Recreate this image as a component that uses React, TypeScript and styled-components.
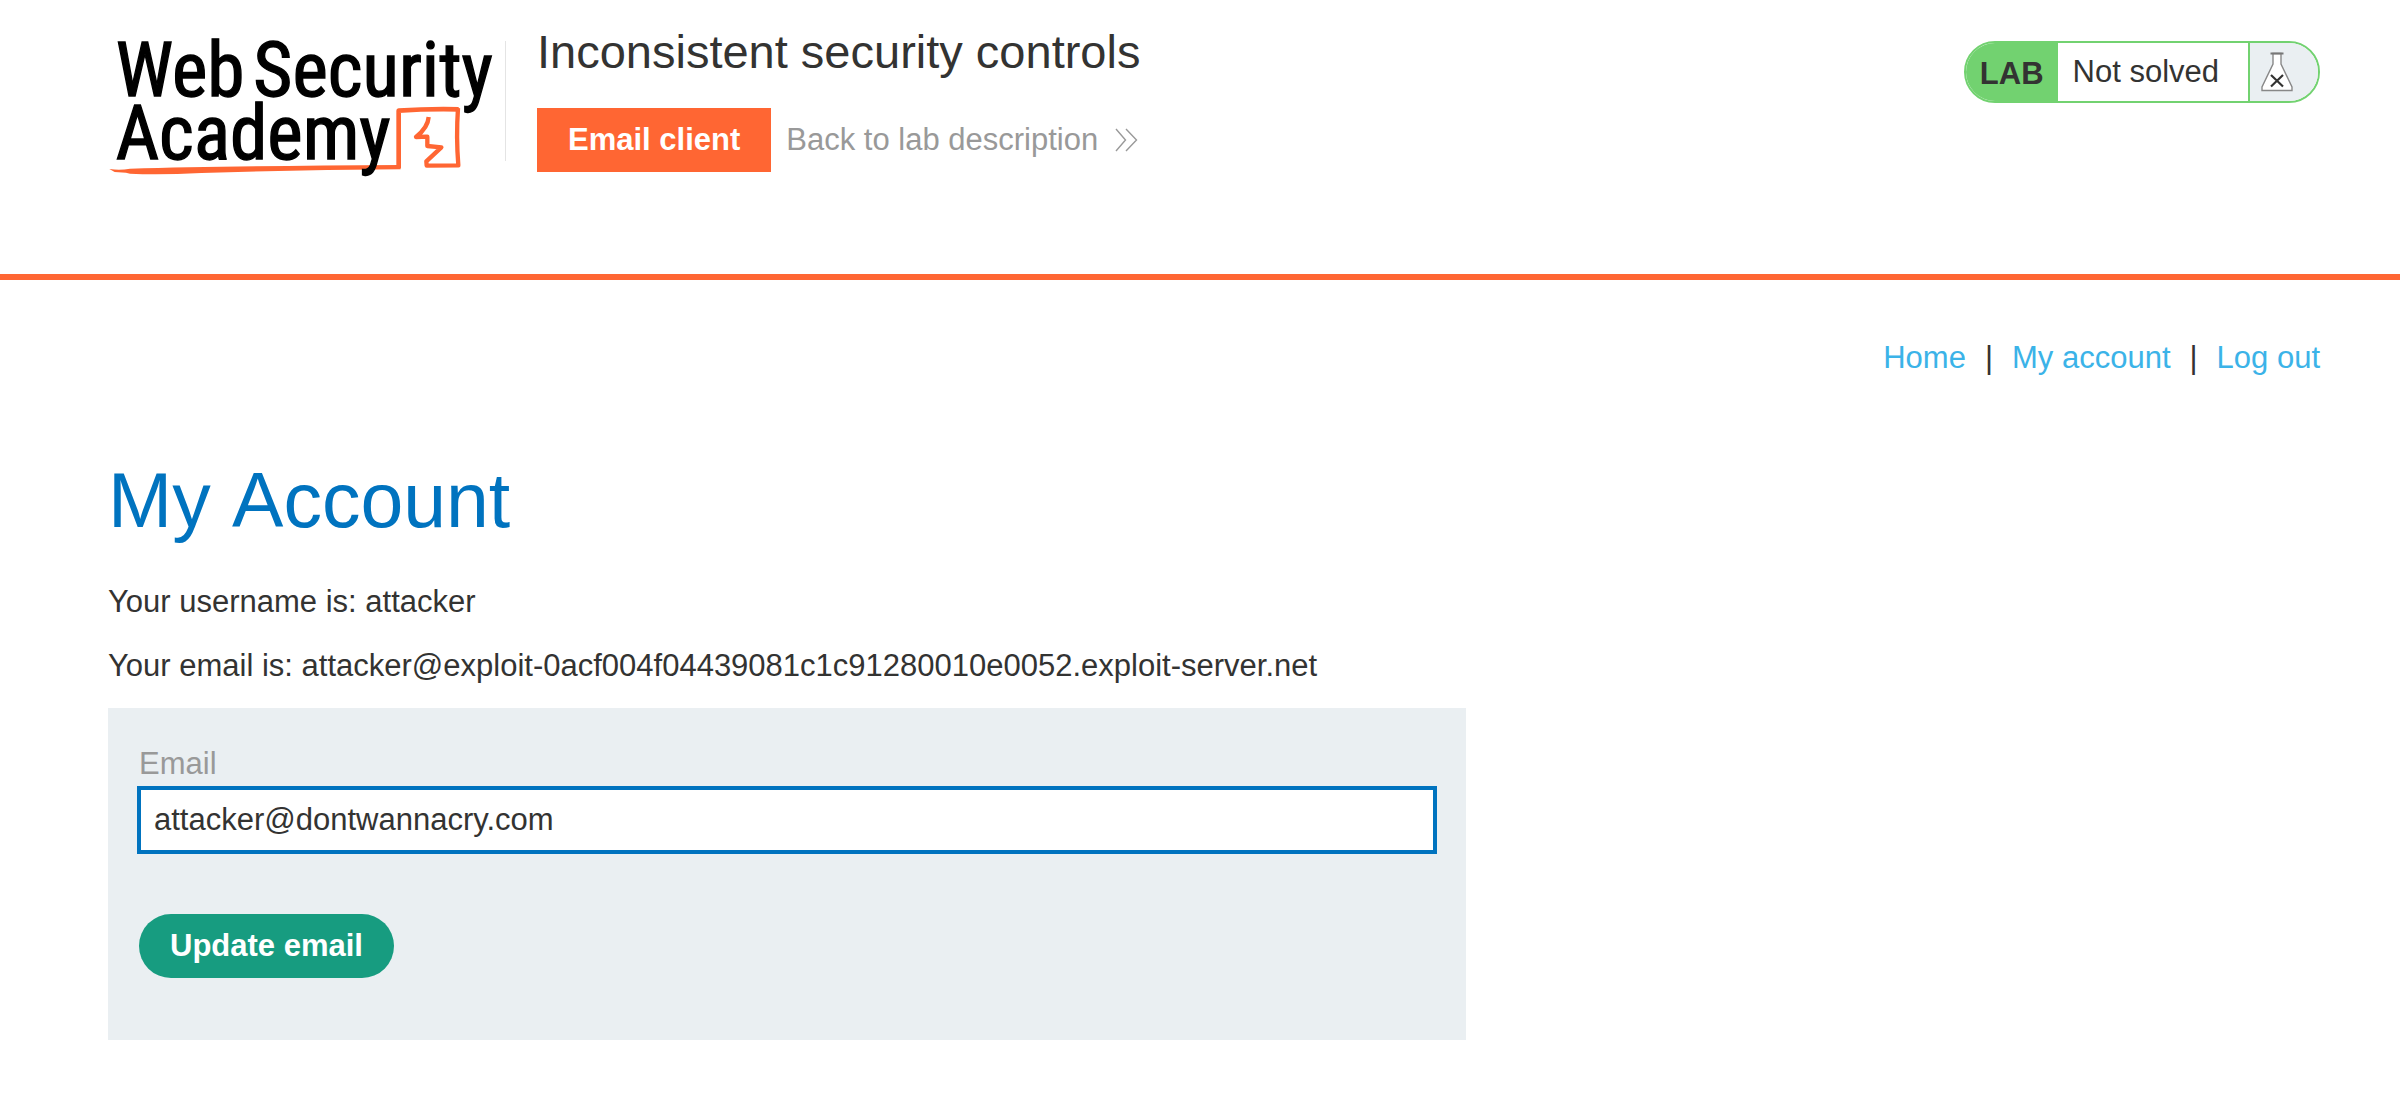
import React, { useState } from 'react';
import styled, { createGlobalStyle } from 'styled-components';

const GlobalStyle = createGlobalStyle`
  *, *::before, *::after { box-sizing: border-box; }
  body {
    margin: 0;
    background: #fff;
    color: #333332;
    font-family: "Liberation Sans", Arial, sans-serif;
    font-size: 31px;
    line-height: 44px;
  }
`;

const Header = styled.header`
  display: flex;
  align-items: flex-start;
  padding: 24px 80px 98px 108px;
  border-bottom: 6px solid #ff6633;
`;

const LogoLink = styled.a`
  display: block;
  flex: none;
  margin-top: 17px;
  padding-right: 9px;
`;

const LogoArt = styled.svg`
  display: block;
  width: 388px;
  height: 135px;
  overflow: visible;
  font-family: "Roboto Condensed", Roboto, sans-serif;
  font-size: 226px;
  font-weight: 400;
`;

const TitleBlock = styled.div`
  flex: 1;
  display: flex;
  align-items: flex-start;
`;

const Divider = styled.div`
  width: 1px;
  height: 120px;
  margin-top: 17px;
  margin-right: 31px;
  background: #e4e4e4;
`;

const Title = styled.h2`
  margin: 0 0 28px;
  font-size: 47px;
  font-weight: 400;
  line-height: 56px;
`;

const Actions = styled.div`
  display: flex;
  align-items: center;
  gap: 15px;
`;

const EmailClientLink = styled.a`
  padding: 10px 31px;
  background: #ff6633;
  color: #fff;
  font-weight: 700;
  text-decoration: none;
`;

const BackLink = styled.a`
  display: flex;
  align-items: center;
  gap: 17px;
  color: #999;
  text-decoration: none;
`;

const Badge = styled.div`
  flex: none;
  display: flex;
  height: 62px;
  margin-top: 17px;
  border: 2px solid #72d270;
  border-radius: 31px;
  overflow: hidden;
  line-height: 58px;
`;

const BadgeLabel = styled.span`
  padding: 2px 14px 0;
  background: #72d270;
  font-weight: 700;
`;

const BadgeState = styled.span`
  padding: 0 29px 0 15px;
`;

const BadgeIcon = styled.span`
  display: flex;
  align-items: center;
  padding: 0 25px 0 11px;
  border-left: 2px solid #72d270;
  background: #eaeff2;
`;

const Main = styled.main`
  padding: 56px 80px 60px 108px;
`;

const Nav = styled.nav`
  display: flex;
  justify-content: flex-end;
  gap: 19px;
`;

const NavLink = styled.a`
  color: #3bb3e8;
  text-decoration: none;
`;

const Heading = styled.h1`
  margin: 72px 0 32px;
  color: #0073bf;
  font-size: 77px;
  font-weight: 400;
  font-kerning: none;
  line-height: 96px;
`;

const Detail = styled.p`
  margin: 0 0 20px;
`;

const Form = styled.form`
  display: flex;
  flex-direction: column;
  align-items: flex-start;
  width: 1358px;
  max-width: 100%;
  padding: 32px 31px 62px;
  background: #eaeff2;
`;

const Label = styled.label`
  color: #999;
  line-height: 48px;
`;

const EmailInput = styled.input`
  width: 100%;
  height: 64px;
  margin-bottom: 62px;
  padding: 0 13px;
  border: 2px solid #0073bf;
  border-radius: 0;
  outline: 2px solid #0073bf;
  background: #fff;
  color: #333332;
  font: inherit;
`;

const SubmitButton = styled.button`
  height: 64px;
  padding: 0 31px;
  border: 0;
  border-radius: 32px;
  background: #179c80;
  color: #fff;
  font: inherit;
  font-weight: 700;
`;

function Logo() {
  return (
    <LogoArt viewBox="24 63 1164 405" role="img" aria-label="Web Security Academy">
      <g fill="none" stroke="#ff6633" strokeLinejoin="round">
        <path d="M896 444V272Q984 266 1076 268" strokeWidth="14" />
        <path d="M1074 264Q1068 352 1075 436L980 437L979 424L1024 382L982 378V350L948 351Q984 322 986 291" strokeWidth="13" />
      </g>
      <path fill="#ff6633" d="M28 447Q60 452 90 446Q400 438 902 435V448Q600 450 304 459Q180 465 90 461L78 458L44 456Z" />
      <g fill="#000" stroke="#000" strokeWidth="4">
        <text x="47" y="229">Web</text>
        <text x="460" y="229">Security</text>
        <text x="47" y="417">Academy</text>
      </g>
    </LogoArt>
  );
}

function DoubleChevron() {
  return (
    <svg width="23" height="24" viewBox="0 0 23 24" fill="none" stroke="#999" strokeWidth="1.4" aria-hidden="true">
      <path d="M1 1L10.500 12L1 23M11 1L21.500 12L11 23" />
    </svg>
  );
}

function Flask() {
  return (
    <svg width="32" height="40" viewBox="0 0 32 40" aria-hidden="true">
      <path d="M12 1.500V12L1 35V38.500H31V35L20 12V1.500Z" fill="#fff" stroke="#888" strokeWidth="1.400" />
      <path d="M9.500 1.500H22.500" stroke="#777" strokeWidth="2" />
      <path d="M10 23L22 34.500M22 23L10 34.500" stroke="#333332" strokeWidth="2.200" />
    </svg>
  );
}

export default function App() {
  const [email, setEmail] = useState('attacker@dontwannacry.com');

  return (
    <>
      <GlobalStyle />
      <Header>
        <LogoLink href="#academy">
          <Logo />
        </LogoLink>
        <TitleBlock>
          <Divider />
          <div>
            <Title>Inconsistent security controls</Title>
            <Actions>
              <EmailClientLink href="#email-client">Email client</EmailClientLink>
              <BackLink href="#lab">
                Back to lab description
                <DoubleChevron />
              </BackLink>
            </Actions>
          </div>
        </TitleBlock>
        <Badge>
          <BadgeLabel>LAB</BadgeLabel>
          <BadgeState>Not solved</BadgeState>
          <BadgeIcon>
            <Flask />
          </BadgeIcon>
        </Badge>
      </Header>
      <Main>
        <Nav>
          <NavLink href="#home">Home</NavLink>
          <span>|</span>
          <NavLink href="#my-account">My account</NavLink>
          <span>|</span>
          <NavLink href="#logout">Log out</NavLink>
        </Nav>
        <Heading>My Account</Heading>
        <Detail>Your username is: attacker</Detail>
        <Detail>Your email is: attacker@exploit-0acf004f04439081c1c91280010e0052.exploit-server.net</Detail>
        <Form onSubmit={(event) => event.preventDefault()}>
          <Label htmlFor="email">Email</Label>
          <EmailInput id="email" type="email" value={email} onChange={(event) => setEmail(event.target.value)} />
          <SubmitButton type="submit">Update email</SubmitButton>
        </Form>
      </Main>
    </>
  );
}
